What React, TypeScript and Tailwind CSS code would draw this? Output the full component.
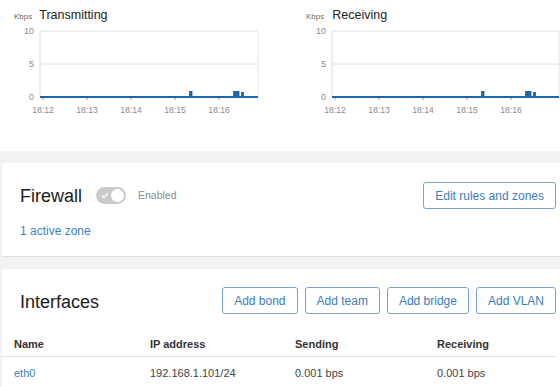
import React from "react";

const times = ["18:12", "18:13", "18:14", "18:15", "18:16"];

function Chart({
  title,
  kbpsLeft,
  titleLeft,
  x0,
  x1,
}: {
  title: string;
  kbpsLeft: number;
  titleLeft: number;
  x0: number;
  x1: number;
}) {
  const top = 7;
  const mid = 40;
  const base = 73;
  // small spikes near the end of the window
  const spikes: [number, number, number][] = [
    [150, 1.5, 5],
    [194, 1.5, 5],
    [197, 1.5, 5],
    [202, 1, 4],
  ];
  let d = `M${x0} ${base}`;
  spikes.forEach(([off, w, h]) => {
    const x = x0 + off;
    d += ` L${x} ${base} L${x} ${base - h} L${x + w} ${base - h} L${x + w} ${base}`;
  });
  d += ` L${x1} ${base}`;

  return (
    <div className="w-[280px] shrink-0">
      <div className="flex h-[24px] items-baseline pt-[6px]" style={{ paddingLeft: kbpsLeft }}>
        <span className="text-[8px] text-[#6a6a6a]">Kbps</span>
        <span
          className="text-[12.5px] text-[#222]"
          style={{ marginLeft: titleLeft - kbpsLeft - 19 }}
        >
          {title}
        </span>
      </div>
      <svg width="280" height="100" className="block">
        <line x1={x0} y1={top} x2={x1} y2={top} stroke="#dcdcdc" strokeWidth="1" />
        <line x1={x0} y1={mid} x2={x1} y2={mid} stroke="#dcdcdc" strokeWidth="1" />
        <line x1={x0} y1={top} x2={x0} y2={base} stroke="#dcdcdc" strokeWidth="1" />
        <line x1={x1} y1={top} x2={x1} y2={base} stroke="#e4e4e4" strokeWidth="1" />
        {[
          ["10", top],
          ["5", mid],
          ["0", base],
        ].map(([t, y]) => (
          <text
            key={t as string}
            x={x0 - 6}
            y={(y as number) + 3}
            textAnchor="end"
            fontSize="9"
            fill="#8a8a8a"
            fontFamily="Liberation Sans, sans-serif"
          >
            {t}
          </text>
        ))}
        {times.map((t, i) => {
          const x = x0 + 3 + i * 44;
          return (
            <g key={t}>
              <line x1={x} y1={base} x2={x} y2={base + 3} stroke="#9a9a9a" strokeWidth="1" />
              <text
                x={x}
                y={89}
                textAnchor="middle"
                fontSize="8.5"
                fill="#8a8a8a"
                fontFamily="Liberation Sans, sans-serif"
              >
                {t}
              </text>
            </g>
          );
        })}
        <path d={d} fill="#2a6fbd" stroke="#1f63b0" strokeWidth="1.8" strokeLinejoin="miter" />
      </svg>
    </div>
  );
}

function Btn({ children }: { children: React.ReactNode }) {
  return (
    <button className="h-[27px] rounded-[3px] border border-[#7aa3cf] px-[11px] text-[12px] text-[#3b7cc0] whitespace-nowrap">
      {children}
    </button>
  );
}

export default function App() {
  return (
    <div className="h-[387px] w-[560px] overflow-hidden bg-white font-['Liberation_Sans',sans-serif]">
      <div className="flex h-[151px] bg-white">
        <Chart title="Transmitting" kbpsLeft={14} titleLeft={40} x0={40} x1={258} />
        <Chart title="Receiving" kbpsLeft={26} titleLeft={53} x0={52} x1={279} />
      </div>
      <div className="bg-[#f4f1f4] pl-[2px] pt-[12px]">
        <section className="border-b border-[#dedede] bg-white pb-[17px] pl-[18px] pr-[4px] pt-[19px]">
          <div className="flex h-[27px] items-center">
            <h2 className="pt-[2px] text-[18px] text-[#1c1c1c]">Firewall</h2>
            <div className="ml-[14px] flex h-[17px] w-[30px] items-center justify-between rounded-full bg-[#cacaca] pl-[5px] pr-[2px]">
              <svg width="8" height="7" viewBox="0 0 8 7">
                <path d="M1 3.6 L3 5.6 L7 1.2" fill="none" stroke="#fff" strokeWidth="1.4" />
              </svg>
              <span className="h-[13px] w-[13px] rounded-full bg-white" />
            </div>
            <span className="ml-[12px] text-[10.5px] text-[#8c8c8c]">Enabled</span>
            <div className="ml-auto">
              <Btn>Edit rules and zones</Btn>
            </div>
          </div>
          <a className="mt-[14px] block text-[12px] leading-[16px] text-[#3d80c4]">1 active zone</a>
        </section>
        <div className="h-[12px]" />
        <section className="bg-white pr-[4px] pt-[18px]">
          <div className="flex h-[27px] items-center pl-[18px]">
            <h2 className="pt-[3px] text-[18px] text-[#1c1c1c]">Interfaces</h2>
            <div className="ml-auto flex gap-[7px]">
              <Btn>Add bond</Btn>
              <Btn>Add team</Btn>
              <Btn>Add bridge</Btn>
              <Btn>Add VLAN</Btn>
            </div>
          </div>
          <div className="mt-[19px] text-[11px]">
            <div className="grid h-[24px] grid-cols-[136px_145px_142px_1fr] items-center border-b border-[#e2e2e2] pl-[12px] font-bold text-[#333]">
              <span>Name</span>
              <span>IP address</span>
              <span>Sending</span>
              <span>Receiving</span>
            </div>
            <div className="grid h-[32px] grid-cols-[136px_145px_142px_1fr] items-center pl-[12px] text-[#444]">
              <span className="text-[#3d80c4]">eth0</span>
              <span>192.168.1.101/24</span>
              <span>0.001 bps</span>
              <span>0.001 bps</span>
            </div>
          </div>
        </section>
      </div>
    </div>
  );
}
